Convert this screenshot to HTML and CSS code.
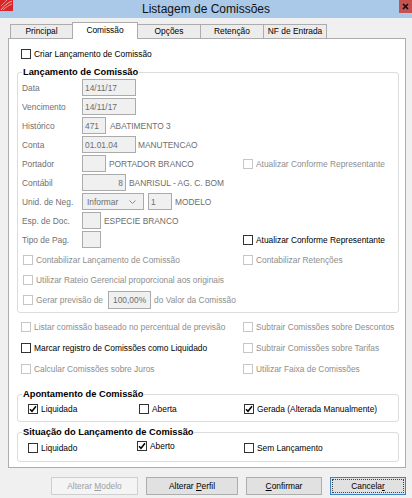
FILE: index.html
```html
<!DOCTYPE html>
<html lang="pt">
<head>
<meta charset="utf-8">
<title>Listagem de Comissões</title>
<link rel="stylesheet" href="styles.css">
</head>
<body>
<div class="window">
  <div class="titlebar">
    <svg class="app-icon" width="13" height="11" viewBox="0 0 13 11">
      <rect width="13" height="11" fill="#d8262a"/>
      <path d="M1 10 C4 6 7 3 12 1" stroke="#f6b6b0" stroke-width="1" fill="none"/>
      <path d="M3 10 C6 7 9 5 12 4" stroke="#f6b6b0" stroke-width="0.8" fill="none"/>
      <path d="M1 6 C3 4 5 2 7 0" stroke="#f3a39c" stroke-width="0.8" fill="none"/>
    </svg>
    <div class="title">Listagem de Comissões</div>
    <div class="close">
      <svg width="7" height="7" viewBox="0 0 7 7"><path d="M1 1 L6 6 M6 1 L1 6" stroke="#111" stroke-width="1.7"/></svg>
    </div>
  </div>

  <div class="client">
    <div class="tabs">
      <div class="tab t-principal">Principal</div>
      <div class="tab active t-comissao">Comissão</div>
      <div class="tab t-opcoes">Opções</div>
      <div class="tab t-retencao">Retenção</div>
      <div class="tab t-nf">NF de Entrada</div>
    </div>

    <div class="page">
      <div class="criar">
        <span class="chk"><span class="box"></span>Criar Lançamento de Comissão</span>
      </div>

      <fieldset class="group g1">
        <legend>Lançamento de Comissão</legend>
        <div class="g1-body">
          <div class="frow">
            <span class="flabel">Data</span><span class="inp w54">14/11/17</span>
          </div>
          <div class="frow">
            <span class="flabel">Vencimento</span><span class="inp w54">14/11/17</span>
          </div>
          <div class="frow">
            <span class="flabel">Histórico</span><span class="inp w24">471</span><span class="desc d4">ABATIMENTO 3</span>
          </div>
          <div class="frow">
            <span class="flabel">Conta</span><span class="inp w54">01.01.04</span><span class="desc d2">MANUTENCAO</span>
          </div>
          <div class="frow split">
            <div class="fleft">
              <span class="flabel">Portador</span><span class="inp w24"></span><span class="desc">PORTADOR BRANCO</span>
            </div>
            <span class="chk dis"><span class="box"></span>Atualizar Conforme Representante</span>
          </div>
          <div class="frow">
            <span class="flabel">Contábil</span><span class="inp w44 right">8</span><span class="desc">BANRISUL - AG. C. BOM</span>
          </div>
          <div class="frow">
            <span class="flabel">Unid. de Neg.</span>
            <span class="inp sel">Informar<svg class="chev" width="7" height="4" viewBox="0 0 7 4"><path d="M0.5 0.5 L3.5 3.5 L6.5 0.5" stroke="#8a8a8a" stroke-width="1" fill="none"/></svg></span>
            <span class="inp w24 ml4">1</span><span class="desc">MODELO</span>
          </div>
          <div class="frow">
            <span class="flabel">Esp. de Doc.</span><span class="inp w19"></span><span class="desc">ESPECIE BRANCO</span>
          </div>
          <div class="frow split">
            <div class="fleft">
              <span class="flabel">Tipo de Pag.</span><span class="inp w19"></span>
            </div>
            <span class="chk"><span class="box"></span>Atualizar Conforme Representante</span>
          </div>
          <div class="crow split2">
            <span class="chk dis"><span class="box"></span>Contabilizar Lançamento de Comissão</span>
            <span class="chk dis"><span class="box"></span>Contabilizar Retenções</span>
          </div>
          <div class="crow">
            <span class="chk dis"><span class="box"></span>Utilizar Rateio Gerencial proporcional aos originais</span>
          </div>
          <div class="crow">
            <span class="chk dis"><span class="box"></span>Gerar previsão de</span>
            <span class="inp w43 center ml5">100,00%</span>
            <span class="desc dis-text">do Valor da Comissão</span>
          </div>
        </div>
      </fieldset>

      <div class="outer-rows">
        <div class="orow">
          <span class="chk dis"><span class="box"></span>Listar comissão baseado no percentual de previsão</span>
          <span class="chk dis"><span class="box"></span>Subtrair Comissões sobre Descontos</span>
        </div>
        <div class="orow">
          <span class="chk"><span class="box"></span>Marcar registro de Comissões como Liquidado</span>
          <span class="chk dis"><span class="box"></span>Subtrair Comissões sobre Tarifas</span>
        </div>
        <div class="orow">
          <span class="chk dis"><span class="box"></span>Calcular Comissões sobre Juros</span>
          <span class="chk dis"><span class="box"></span>Utilizar Faixa de Comissões</span>
        </div>
      </div>

      <fieldset class="group g2">
        <legend>Apontamento de Comissão</legend>
        <div class="gitems items2">
          <span class="chk"><span class="box on"><svg width="8" height="8" viewBox="0 0 8 8"><path d="M1 4.2 L3 6.3 L7 1.3" stroke="#000" stroke-width="1.5" fill="none"/></svg></span>Liquidada</span>
          <span class="chk"><span class="box"></span>Aberta</span>
          <span class="chk"><span class="box on"><svg width="8" height="8" viewBox="0 0 8 8"><path d="M1 4.2 L3 6.3 L7 1.3" stroke="#000" stroke-width="1.5" fill="none"/></svg></span>Gerada (Alterada Manualmente)</span>
        </div>
      </fieldset>

      <fieldset class="group g3">
        <legend>Situação do Lançamento de Comissão</legend>
        <div class="gitems items3">
          <span class="chk"><span class="box"></span>Liquidado</span>
          <span class="chk raised"><span class="box on"><svg width="8" height="8" viewBox="0 0 8 8"><path d="M1 4.2 L3 6.3 L7 1.3" stroke="#000" stroke-width="1.5" fill="none"/></svg></span>Aberto</span>
          <span class="chk"><span class="box"></span>Sem Lançamento</span>
        </div>
      </fieldset>
    </div>

    <div class="buttons">
      <div class="btn disabled b-modelo"><span>Alterar <u>M</u>odelo</span></div>
      <div class="btn b-perfil"><span>Alterar <u>P</u>erfil</span></div>
      <div class="btn b-confirmar"><span><u>C</u>onfirmar</span></div>
      <div class="btn focused b-cancelar"><span>Cancela<u>r</u></span></div>
    </div>
  </div>
</div>
</body>
</html>
```

FILE: styles.css
```css
* { box-sizing: border-box; }
html, body { margin: 0; padding: 0; }
body {
  width: 412px;
  height: 498px;
  overflow: hidden;
  background: #f0f0f0;
  font-family: "Liberation Sans", Arial, sans-serif;
  font-size: 8.4px;
  color: #000;
}
.window { width: 412px; height: 498px; }

/* title bar */
.titlebar {
  height: 18px;
  background: #aac8e8;
  display: grid;
  grid-template-columns: 13px 1fr 13px;
  align-items: start;
}
.app-icon { display: block; }
.title {
  text-align: center;
  font-size: 12px;
  line-height: 19px;
  color: #111;
}
.close {
  width: 13px;
  height: 13px;
  background: #c75050;
  display: flex;
  align-items: center;
  justify-content: center;
}
.close svg { display: block; }

/* client */
.client { padding: 4px 6px 0 8px; }

.tabs {
  display: flex;
  align-items: flex-end;
  height: 16px;
  padding-left: 2px;
}
.tab {
  height: 14px;
  border: 1px solid #acacac;
  border-bottom: 0;
  background: #ececec;
  display: flex;
  align-items: center;
  justify-content: center;
  margin-left: -1px;
  color: #000;
  line-height: 1;
}
.tab:first-child { margin-left: 0; }
.tab.active {
  height: 17px;
  background: #fff;
  margin-bottom: -1px;
  z-index: 1;
  padding-bottom: 2px;
}
.t-principal { width: 63px; }
.t-comissao { width: 66px; }
.t-opcoes { width: 64px; }
.t-retencao { width: 64px; }
.t-nf { width: 64px; }

.page {
  height: 430px;
  border: 1px solid #acacac;
  background: #fff;
  display: flex;
  flex-direction: column;
}
.page > * { flex: none; }

/* checkbox */
.chk {
  display: inline-flex;
  align-items: center;
  gap: 3px;
  white-space: nowrap;
  color: #000;
}
.box {
  width: 10px;
  height: 10px;
  border: 1px solid #333;
  background: #fff;
  flex: none;
  display: flex;
  align-items: center;
  justify-content: center;
}
.box svg { display: block; }
.chk.dis { color: #8e8e8e; }
.chk.dis .box { border-color: #c6c6c6; }

.criar {
  margin-top: 7px;
  height: 16px;
  padding-left: 12px;
  display: flex;
  align-items: center;
}

/* group boxes */
fieldset.group {
  border: 1px solid #dcdcdc;
  border-radius: 3px;
  margin: 0 6px 0 8px;
  padding: 0;
  min-width: 0;
}
fieldset.group legend {
  margin-left: 4px;
  padding: 0 1px;
  font-weight: bold;
  font-size: 9.3px;
  line-height: 12px;
  height: 12px;
  color: #000;
}
fieldset.g1 { margin-top: 4px; }
fieldset.g2 { margin-top: 9px; }
fieldset.g3 { margin-top: 4px; }

.g1-body {
  padding: 1px 0 2px 4px;
  display: flex;
  flex-direction: column;
}
.frow {
  height: 17px;
  margin-bottom: 2px;
  display: flex;
  align-items: center;
  color: #6d6d6d;
}
.frow.split {
  display: grid;
  grid-template-columns: 221px 1fr;
}
.frow.split .chk { justify-self: start; }
.fleft { display: flex; align-items: center; height: 17px; }
.flabel { width: 60px; flex: none; color: #707070; }
.inp {
  height: 17px;
  border: 1px solid #ababab;
  background: #f0f0f0;
  color: #6d6d6d;
  display: flex;
  align-items: center;
  padding: 0 2px;
  flex: none;
  white-space: nowrap;
}
.inp.right { justify-content: flex-end; }
.inp.center { justify-content: center; padding: 0 1px; }
.w54 { width: 54px; }
.w44 { width: 44px; }
.w43 { width: 43px; }
.w24 { width: 24px; }
.w19 { width: 19px; }
.inp.sel {
  width: 62px;
  padding-left: 4px;
  justify-content: space-between;
  padding-right: 7px;
}
.chev { display: block; }
.ml4 { margin-left: 4px; }
.ml5 { margin-left: 5px; }
.desc { margin-left: 3px; color: #6d6d6d; white-space: nowrap; }
.desc.d4 { margin-left: 4px; }
.desc.d2 { margin-left: 2px; }
.desc.dis-text { color: #8e8e8e; }

.crow {
  height: 20px;
  display: flex;
  align-items: center;
  padding-left: 1px;
}
.crow.split2 {
  display: grid;
  grid-template-columns: 220px 1fr;
}
.crow.split2 .chk { justify-self: start; }
.crow .inp { height: 18px; }

.outer-rows { margin-top: 3px; }
.orow {
  height: 21px;
  display: grid;
  grid-template-columns: 222px 1fr;
  align-items: center;
  padding-left: 12px;
}
.orow .chk { justify-self: start; }

.gitems {
  display: grid;
  align-items: center;
  padding-left: 10px;
}
.gitems .chk { justify-self: start; }
.items2 {
  height: 18px;
  margin-bottom: 3px;
  grid-template-columns: 111px 105px 1fr;
}
.items3 {
  height: 20px;
  margin-bottom: 3px;
  grid-template-columns: 109px 107px 1fr;
}
.chk.raised { margin-bottom: 4px; }

/* buttons */
.buttons {
  display: flex;
  justify-content: flex-end;
  gap: 8px;
  margin-top: 9px;
}
.btn {
  height: 18px;
  border: 1px solid #adadad;
  background: #e1e1e1;
  display: flex;
  align-items: center;
  justify-content: center;
  color: #000;
  white-space: nowrap;
}
.btn u { text-decoration: underline; text-underline-offset: 1px; }
.btn.disabled {
  background: #f4f4f4;
  border-color: #cfcfcf;
  color: #a0a0a0;
}
.btn.focused {
  border-color: #3c84c8;
  outline: 1px dotted #444;
  outline-offset: -3px;
}
.b-modelo { width: 87px; }
.b-perfil { width: 92px; }
.b-confirmar { width: 76px; }
.b-cancelar { width: 76px; }
```
